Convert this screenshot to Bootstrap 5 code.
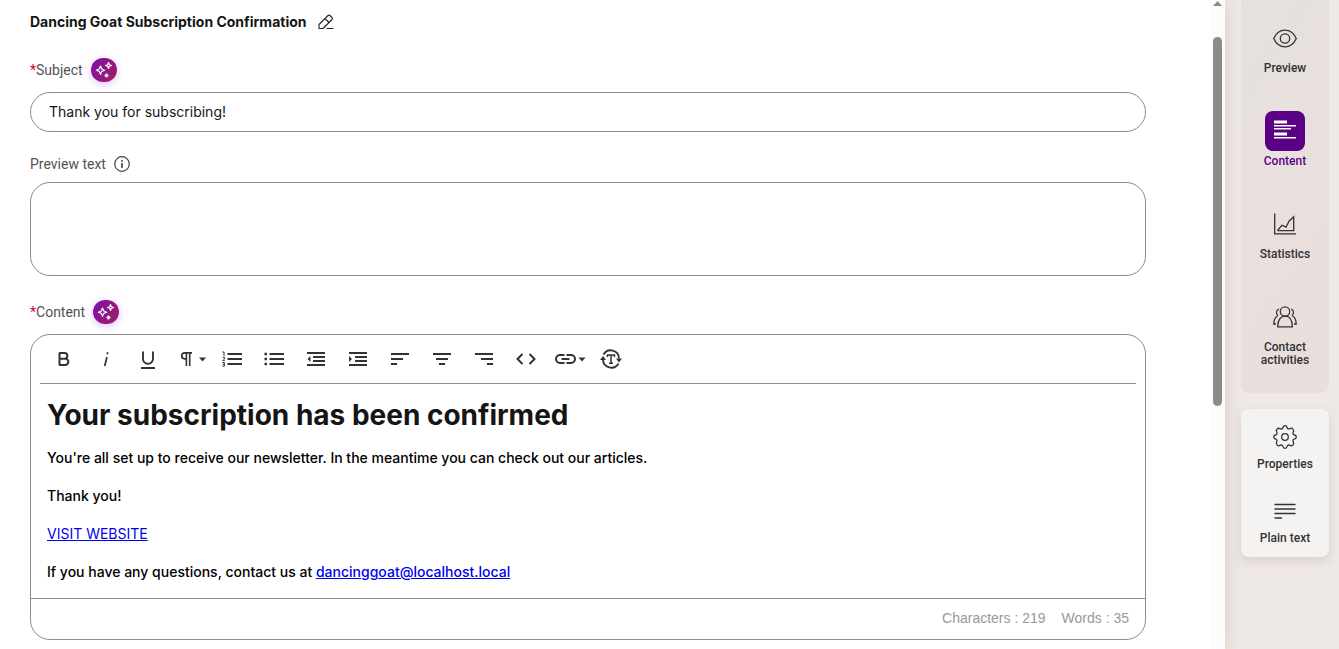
<!DOCTYPE html>
<html lang="en">
<head>
<meta charset="utf-8">
<meta name="viewport" content="width=device-width, initial-scale=1">
<title>Dancing Goat Subscription Confirmation</title>
<link href="https://cdn.jsdelivr.net/npm/bootstrap@5.3.0/dist/css/bootstrap.min.css" rel="stylesheet">
<style>
:root { --line: #8c8c8c; --ink: #151515; --label: #525252; --accent: #5a0085; }
body { font-family: Inter, "Liberation Sans", sans-serif; font-size: 14px; color: var(--ink); background: #fff; }
svg { display: block; flex: none; }
.app-shell { background: #efe9e6; }
.workspace { background: #fff; min-width: 0; box-shadow: 0 0 16px rgba(80, 50, 50, .16); }
.form-area { padding: 0 64px 9px 30px; }
.title-row { height: 44px; gap: 12px; margin-bottom: 14px; }
.title-row h1 { font-size: 14px; line-height: 20px; font-weight: 700; }
.label-row { height: 24px; gap: 8px; color: var(--label); }
.label-row label, .label-row .field-name { line-height: 20px; font-family: Roboto, sans-serif; }
.required { color: #d0021b; }
.plain-btn { border: 0; background: none; padding: 0; color: inherit; }
.ai-btn { width: 26px; height: 24px; border: 0; padding: 0; border-radius: 12px; background: linear-gradient(125deg, #7d0fb0, #a02060); box-shadow: 0 2px 8px rgba(150, 50, 255, .3); }
.form-control.field { border-color: var(--line); border-radius: 20px; padding: 7px 18px 9px; font-size: 14px; line-height: 22px; color: var(--ink); }
.subject-field { height: 40px; margin: 10px 0 20px; }
.preview-field { height: 94px; margin: 6px 0 24px; resize: none; }
.editor { border: 1px solid var(--line); border-radius: 20px; margin-top: 10px; }
.tools { margin: 0 9px; padding-left: 3px; border-bottom: 1px solid var(--line); color: #333; }
.tools button { width: 42px; height: 48px; }
.copy { padding: 14px 16px 15px; line-height: 22px; font-weight: 500; color: #000; outline: 0; }
.copy h2 { font-size: 28px; line-height: 34px; font-weight: 700; margin-bottom: 15px; color: var(--ink); }
.copy p { margin-bottom: 16px; }
.copy a { color: #0000ee; font-weight: 400; }
.copy a[href^="mailto"] { font-weight: 500; }
.counts { height: 41px; padding-right: 16px; padding-bottom: 2px; gap: 16px; border-top: 1px solid var(--line); color: #999; font-family: "Liberation Sans", Arial, sans-serif; }
.scroll-track { width: 15px; background: #fcfcfc; padding-top: 1px; }
.scroll-thumb { width: 9px; height: 369px; margin-top: 31px; border-radius: 5px; background: #8b8b8b; }
.side { width: 114px; padding: 0 10px 0 16px; gap: 16px; }
.side-group { border-radius: 0 0 8px 8px; padding: 18px 4px 26px; gap: 36px; background: linear-gradient(125deg, #e5e1dd, #e9e0de 50%, #e8dfdd); }
.side-group.raised { border-radius: 8px; padding: 8px 4px 12px; gap: 20px; background: #f4f3f1; box-shadow: 0 4px 12px rgba(100, 70, 70, .16); }
.side-link { color: #333; font-family: Roboto, sans-serif; font-size: 12px; line-height: 13px; font-weight: 500; text-align: center; text-decoration: none; gap: 4px; }
.raised .side-link { gap: 1px; }
.side-link.active { color: var(--accent); }
.tile { width: 40px; height: 40px; border-radius: 8px; }
.active .tile { background: var(--accent); color: #fff; }
</style>
<script src="https://cdn.jsdelivr.net/npm/bootstrap@5.3.0/dist/js/bootstrap.bundle.min.js"></script>
</head>
<body>
<svg width="0" height="0" class="position-absolute" aria-hidden="true">
  <symbol id="sparkles" viewBox="0 0 26 24">
    <g fill="none" stroke="#fff" stroke-width="1.2" stroke-linejoin="round">
      <path d="M9.500 8l1.200 3 3 1.200-3 1.200-1.200 3-1.200-3-3-1.200 3-1.200z"/>
      <path d="M17.500 4.500l.8 2.200 2.200.8-2.200.8-.8 2.200-.8-2.200-2.200-.8 2.200-.8z"/>
      <path d="M15.500 15.500v4M13.500 17.500h4" stroke-width="1.700"/>
    </g>
  </symbol>
</svg>
<div class="app-shell d-flex min-vh-100">
  <div class="workspace d-flex flex-grow-1">
    <main class="form-area flex-grow-1">
      <div class="title-row d-flex align-items-center">
        <h1 class="m-0">Dancing Goat Subscription Confirmation</h1>
        <button class="plain-btn" type="button" aria-label="Rename">
          <svg width="16" height="16" viewBox="0 0 16 16" fill="none" stroke="#222" stroke-width="1.1" stroke-linejoin="round" stroke-linecap="round"><path d="M1 14.500V10.500L10 1.500Q11 .7 12 1.500L14 3.500Q14.800 4.500 14 5.500L5 14.500zM7 4.500l4 4M9 14.500h6"/></svg>
        </button>
      </div>
      <div class="label-row d-flex align-items-center">
        <label for="subject"><span class="required">*</span>Subject</label>
        <button class="ai-btn" type="button" aria-label="Suggest subject"><svg width="26" height="24"><use href="#sparkles"/></svg></button>
      </div>
      <input id="subject" type="text" class="form-control field subject-field" value="Thank you for subscribing!">
      <div class="label-row d-flex align-items-center">
        <label for="preview">Preview text</label>
        <button class="plain-btn" type="button" aria-label="About preview text">
          <svg width="16" height="16" viewBox="0 0 16 16" fill="none" stroke="#444" stroke-width="1.200"><circle cx="8" cy="8" r="7.300"/><path d="M8 7v5M8 4v1.700" stroke-width="1.600"/></svg>
        </button>
      </div>
      <textarea id="preview" class="form-control field preview-field"></textarea>
      <div class="label-row d-flex align-items-center">
        <span class="field-name" id="content-label"><span class="required">*</span>Content</span>
        <button class="ai-btn" type="button" aria-label="Suggest content"><svg width="26" height="24"><use href="#sparkles"/></svg></button>
      </div>
      <section class="editor">
        <div class="tools d-flex flex-wrap" role="toolbar" aria-label="Formatting">
          <button class="plain-btn" type="button" aria-label="Bold"><svg width="42" height="24" viewBox="0 0 42 24" fill="none" stroke="currentColor" stroke-width="2"><path d="M16.500 6v12M16 6h5.500a2.800 2.800 0 0 1 0 5.700H16M21.500 11.700h.7a3.100 3.100 0 0 1 0 6.300H16"/></svg></button>
          <button class="plain-btn" type="button" aria-label="Italic"><svg width="42" height="24" viewBox="0 0 42 24" fill="none" stroke="currentColor" stroke-width="1.700"><path d="M22 10l-2.300 9M22.700 5.300l-.5 2"/></svg></button>
          <button class="plain-btn" type="button" aria-label="Underline"><svg width="42" height="24" viewBox="0 0 42 24" fill="none" stroke="currentColor" stroke-width="1.900"><path d="M16 4.500v7.300a5 5 0 0 0 10 0V4.500M14 21h14"/></svg></button>
          <button class="plain-btn" type="button" aria-label="Paragraph format"><svg width="42" height="24" viewBox="0 0 42 24" fill="currentColor"><path fill-rule="evenodd" d="M23 5v1.700h-1.500V19h-1.600V6.700h-1.700V19h-1.600v-6.300h-.9a3.850 3.850 0 0 1 0-7.700zM16.600 6.700h-.9a2.150 2.150 0 0 0 0 4.300h.9z"/><path d="M30 10.500h7l-3.500 4z"/></svg></button>
          <button class="plain-btn" type="button" aria-label="Numbered list"><svg width="42" height="24" viewBox="0 0 42 24" fill="none" stroke="currentColor" stroke-width="2"><path d="M16.500 7H31M16.500 12H31M16.500 17H31"/><path d="M11.500 5H13v4M11.500 10.300h2v1.500l-1.700 1.800h2M11.300 15.500h2v3.700h-2M12 17.300h1.300" stroke-width="1"/></svg></button>
          <button class="plain-btn" type="button" aria-label="Bulleted list"><svg width="42" height="24" viewBox="0 0 42 24" fill="none" stroke="currentColor" stroke-width="2"><path d="M16.500 7H31M16.500 12H31M16.500 17H31"/><path d="M11.500 7H14M11.500 12H14M11.500 17H14" stroke-width="2.500"/></svg></button>
          <button class="plain-btn" type="button" aria-label="Decrease indent"><svg width="42" height="24" viewBox="0 0 42 24" fill="none" stroke="currentColor" stroke-width="2"><path d="M12 6h18M18 10h12M18 14h12M12 18h18"/><path d="M15.500 9v6l-3-3z" fill="currentColor" stroke="none"/></svg></button>
          <button class="plain-btn" type="button" aria-label="Increase indent"><svg width="42" height="24" viewBox="0 0 42 24" fill="none" stroke="currentColor" stroke-width="2"><path d="M12 6h18M18 10h12M18 14h12M12 18h18"/><path d="M12 9v6l3-3z" fill="currentColor" stroke="none"/></svg></button>
          <button class="plain-btn" type="button" aria-label="Align left"><svg width="42" height="24" viewBox="0 0 42 24" fill="none" stroke="currentColor" stroke-width="2"><path d="M12 7h18M12 12h12M12 17h6"/></svg></button>
          <button class="plain-btn" type="button" aria-label="Align center"><svg width="42" height="24" viewBox="0 0 42 24" fill="none" stroke="currentColor" stroke-width="2"><path d="M12 7h18M15 12h12M18 17h6"/></svg></button>
          <button class="plain-btn" type="button" aria-label="Align right"><svg width="42" height="24" viewBox="0 0 42 24" fill="none" stroke="currentColor" stroke-width="2"><path d="M12 7h18M18 12h12M24 17h6"/></svg></button>
          <button class="plain-btn" type="button" aria-label="Code view"><svg width="42" height="24" viewBox="0 0 42 24" fill="none" stroke="currentColor" stroke-width="2"><path d="M17.500 7l-5 5 5 5M24.500 7l5 5-5 5"/></svg></button>
          <button class="plain-btn" type="button" aria-label="Link"><svg width="42" height="24" viewBox="0 0 42 24" fill="none" stroke="currentColor" stroke-width="2"><path d="M17.500 8h-4.500a4 4 0 0 0 0 8H17.500M19.500 8h4.500a4 4 0 0 1 0 8H19.500M14.500 12h8"/><path d="M31.500 10.500h7l-3.500 4z" fill="currentColor" stroke="none"/></svg></button>
          <button class="plain-btn" type="button" aria-label="Insert dynamic text"><svg width="42" height="24" viewBox="0 0 42 24" fill="none" stroke="currentColor" stroke-width="1.800"><path d="M14.500 7.500a8.300 8.300 0 0 1 15.500 4M29.500 16.500a8.300 8.300 0 0 1-15.500-4"/><path d="M27 11.500h6l-3 4zM11 13h6l-3-4z" fill="currentColor" stroke="none"/><path d="M18.500 10V8h7v2M22 8v8.500M20 16.300h4" stroke-width="1.500"/></svg></button>
        </div>
        <div class="copy" contenteditable="true" spellcheck="false" role="textbox" aria-multiline="true" aria-labelledby="content-label">
          <h2>Your subscription has been confirmed</h2>
          <p>You're all set up to receive our newsletter. In the meantime you can check out our articles.</p>
          <p>Thank you!</p>
          <p><a href="#">VISIT WEBSITE</a></p>
          <p class="mb-0">If you have any questions, contact us at <a href="mailto:dancinggoat@localhost.local">dancinggoat@localhost.local</a></p>
        </div>
        <div class="counts d-flex justify-content-end align-items-center"><span>Characters : 219</span><span>Words : 35</span></div>
      </section>
    </main>
    <div class="scroll-track d-flex flex-column align-items-center" aria-hidden="true">
      <svg width="9" height="5" viewBox="0 0 9 5"><path d="M4.500 0L9 5H0z" fill="#8b8b8b"/></svg>
      <div class="scroll-thumb"></div>
    </div>
  </div>
  <aside class="side d-flex flex-column flex-shrink-0">
    <nav class="side-group d-flex flex-column" aria-label="Email">
      <a href="#" class="side-link d-flex flex-column align-items-center"><span class="tile d-flex align-items-center justify-content-center"><svg width="24" height="24" viewBox="0 0 24 24" fill="none" stroke="currentColor" stroke-width="1.300"><path d="M.7 12.500C3 7.500 7 4.200 12 4.200S21 7.500 23.300 12.500C21 17.500 17 20.800 12 20.800S3 17.500 .7 12.500z"/><circle cx="12" cy="12.500" r="4.700"/></svg></span>Preview</a>
      <a href="#" class="side-link active d-flex flex-column align-items-center" aria-current="page"><span class="tile d-flex align-items-center justify-content-center"><svg width="24" height="24" viewBox="0 0 24 24" fill="currentColor"><path d="M1 1.500h13v3H1zM1 6h22v1.400H1zM1 9h17v1.400H1zM1 13.500h13v3H1zM1 18h22v1.400H1z"/></svg></span>Content</a>
      <a href="#" class="side-link d-flex flex-column align-items-center"><span class="tile d-flex align-items-center justify-content-center"><svg width="24" height="24" viewBox="0 0 24 24" fill="none" stroke="currentColor" stroke-width="1.300"><path d="M1.700 1.500v20.300H23M5 18.700v-1l4-4.500 4 2 3-6 4.700-4.500v14z"/></svg></span>Statistics</a>
      <a href="#" class="side-link d-flex flex-column align-items-center"><span class="tile d-flex align-items-center justify-content-center"><svg width="24" height="24" viewBox="0 0 24 24" fill="none" stroke="currentColor" stroke-width="1.300"><circle cx="12" cy="6.500" r="4.700"/><path d="M4.700 21.800C4.700 14.500 8 11.200 12 11.200s7.300 3.300 7.300 10.600zM6 4a3.700 3.700 0 0 0-1 6.500M3 19H.8c0-4 1.200-7 4.200-8.500M18 4a3.700 3.700 0 0 1 1 6.500M21 19h2.200c0-4-1.200-7-4.200-8.500"/></svg></span>Contact<br>activities</a>
    </nav>
    <nav class="side-group raised d-flex flex-column" aria-label="Options">
      <a href="#" class="side-link d-flex flex-column align-items-center"><span class="tile d-flex align-items-center justify-content-center"><svg width="24" height="24" viewBox="0 0 24 24" fill="none" stroke="currentColor" stroke-width="1.300" stroke-linejoin="round"><path d="M10 2.500Q10.300.7 12 .7T14 2.500Q14.500 4.500 17 3.700Q18.500 2.500 19.900 4.100T20.300 7Q19.300 9.300 21.500 10Q23.300 10.300 23.300 12T21.500 14Q19.300 14.700 20.300 17Q21.400 18.500 19.900 19.900T17 20.300Q14.700 19.300 14 21.500Q13.700 23.300 12 23.300T10 21.500Q9.300 19.300 7 20.300Q5.500 21.400 4.100 19.900T3.700 17Q4.700 14.700 2.500 14Q.7 13.700 .7 12T2.500 10Q4.700 9.300 3.700 7Q2.600 5.500 4.100 4.100T7 3.700Q9.300 4.700 10 2.500z"/><circle cx="12" cy="12" r="3.300"/></svg></span>Properties</a>
      <a href="#" class="side-link d-flex flex-column align-items-center"><span class="tile d-flex align-items-center justify-content-center"><svg width="24" height="24" viewBox="0 0 24 24" fill="none" stroke="currentColor" stroke-width="1.400" stroke-linecap="round"><path d="M2 5.500h20M2 10h20M2 14.500h20M2 19h6.500"/></svg></span>Plain text</a>
    </nav>
  </aside>
</div>
</body>
</html>
